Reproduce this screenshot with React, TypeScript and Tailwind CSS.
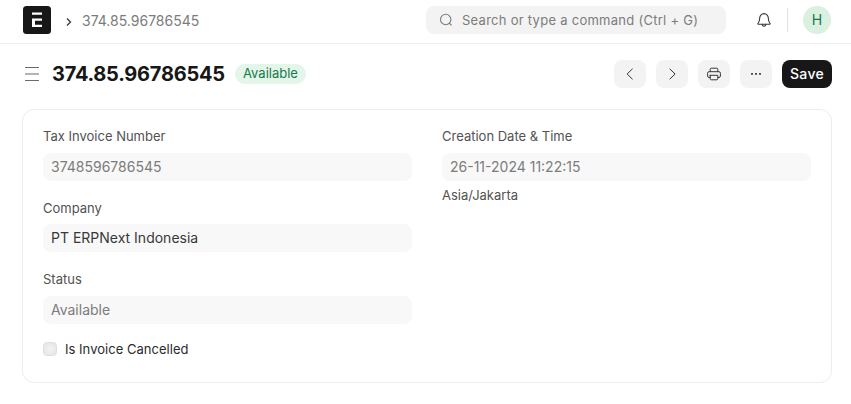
import type { ReactNode } from "react";

function Logo() {
  return (
    <svg width="28" height="28" viewBox="0 0 28 28" fill="none" className="shrink-0">
      <rect width="28" height="28" rx="3.5" fill="#171717" />
      <path d="M9 6.6h10v2.2H9zM9 12.4h10v2.4h-7V18.8h7V21H9z" fill="#fff" />
    </svg>
  );
}

function IconButton({ children, label }: { children: ReactNode; label: string }) {
  return (
    <button
      aria-label={label}
      className="flex h-7 w-8 items-center justify-center rounded-lg bg-[#f3f3f3] text-[#383838]"
    >
      <svg width="16" height="16" viewBox="0 0 16 16" fill="none" stroke="currentColor" strokeLinecap="round" strokeLinejoin="round">
        {children}
      </svg>
    </button>
  );
}

function Field({ label, value, link = false }: { label: string; value: string; link?: boolean }) {
  return (
    <div>
      <div className="h-[17px] text-[13px] leading-[17px] text-[#525252]">{label}</div>
      <div
        className={`flex h-7 items-center rounded-lg bg-[#f8f8f8] px-2 text-sm ${
          link ? "mt-[7px] text-[#383838]" : "mt-2 text-[#7c7c7c]"
        }`}
      >
        {value}
      </div>
    </div>
  );
}

export default function App() {
  return (
    <div className="h-[404px] w-[851px] overflow-hidden bg-white font-['Inter',sans-serif] text-[#171717]">
      <header className="flex h-11 items-start border-b border-[#ededed] pt-1.5 pr-5 pl-[23px]">
        <Logo />
        <svg width="8" height="10" viewBox="0 0 8 10" fill="none" stroke="#383838" strokeWidth="1.3" className="mt-[11px] ml-3.5">
          <path d="M2 1.5 5.5 5 2 8.5" />
        </svg>
        <span className="ml-[9px] text-sm leading-[29px] text-[#7c7c7c]">374.85.96786545</span>
        <div className="ml-auto flex h-7 w-[300px] items-center rounded-lg bg-[#f3f3f3] pl-3">
          <svg width="16" height="16" viewBox="0 0 16 16" fill="none" stroke="#7c7c7c" strokeWidth="1.1" strokeLinecap="round">
            <circle cx="7.7" cy="7.5" r="5.2" />
            <path d="m11.5 11.3 1.7 1.7" />
          </svg>
          <span className="ml-2 pt-px text-[13px] tracking-[0.27px] whitespace-nowrap text-[#7c7c7c]">
            Search or type a command (Ctrl + G)
          </span>
        </div>
        <svg width="16" height="16" viewBox="0 0 16 16" fill="none" stroke="#383838" strokeWidth="1.1" strokeLinecap="round" strokeLinejoin="round" className="mt-1.5 ml-[30px]">
          <path d="M8 1.8c-2.6 0-4.3 1.9-4.3 4.3 0 3.3-.8 4.3-1.7 5.2-.2.4 0 .9.5.9h11c.5 0 .7-.5.5-.9-.9-.9-1.7-1.9-1.7-5.2 0-2.4-1.7-4.3-4.3-4.3Z" />
          <path d="M6.2 12.4c.1 1.2.8 1.8 1.8 1.8s1.7-.6 1.8-1.8M8 1.2v.6" />
        </svg>
        <div className="mt-0.5 ml-[15px] h-6 w-px bg-[#e2e2e2]" />
        <div className="ml-[15px] flex size-7 items-center justify-center rounded-full bg-[#daf0e1] text-sm text-[#16794c]">
          H
        </div>
      </header>

      <div className="flex h-[60px] items-center pr-[19px] pl-6">
        <svg width="16" height="16" viewBox="0 0 16 16" stroke="#6a6a6a" strokeWidth="1.2">
          <path d="M1 1.5h14M1 8h14M1 14.5h14" />
        </svg>
        <h1 className="ml-3 w-[173px] text-xl leading-7 font-bold tracking-[-0.25px] whitespace-nowrap">374.85.96786545</h1>
        <span className="ml-2.5 flex h-5 w-[71px] items-center justify-center rounded-full bg-[#e4f5e9] text-[13px] text-[#16794c]">
          Available
        </span>
        <div className="ml-auto flex gap-2.5">
          <IconButton label="Previous">
            <path d="M10.3 3 5.1 8l5.2 5" />
          </IconButton>
          <IconButton label="Next">
            <path d="m5.9 3 5.2 5-5.2 5" />
          </IconButton>
          <IconButton label="Print">
            <path d="M4.2 5.7V3.2c0-.6.4-1 1-1h5.6c.6 0 1 .4 1 1v2.5M4.2 11.5H3.1a1.5 1.5 0 0 1-1.5-1.5V7.2a1.5 1.5 0 0 1 1.5-1.5h9.8a1.5 1.5 0 0 1 1.5 1.5V10a1.5 1.5 0 0 1-1.5 1.5h-1.1M4.2 9.3h7.6v3.5c0 .6-.4 1-1 1H5.2c-.6 0-1-.4-1-1V9.3Z" />
          </IconButton>
          <IconButton label="More">
            <path d="M3.1 7h1.8v1.8H3.1zM7.1 7h1.8v1.8H7.1zM11.1 7h1.8v1.8h-1.8z" fill="currentColor" stroke="none" />
          </IconButton>
          <button className="h-7 w-[50px] rounded-lg bg-[#171717] text-sm font-medium tracking-[0.28px] text-white">Save</button>
        </div>
      </div>

      <main className="mt-[5px] ml-[22px] flex h-[274px] w-[810px] gap-[30px] rounded-xl border border-[#ededed] px-5 pt-[18px]">
        <section className="flex w-[369px] flex-col gap-[19px]">
          <Field label="Tax Invoice Number" value="3748596786545" />
          <Field label="Company" value="PT ERPNext Indonesia" link />
          <Field label="Status" value="Available" />
          <label className="-mt-px flex h-4 items-start gap-2 text-[13px] leading-[14px] tracking-[0.03px] text-[#2b2b2b]">
            <span className="size-3.5 rounded border border-[#dfdfdf] bg-radial from-[#f2f2f2] to-[#e5e5e5]" />
            Is Invoice Cancelled
          </label>
        </section>
        <section className="w-[369px]">
          <Field label="Creation Date & Time" value="26-11-2024 11:22:15" />
          <p className="mt-1.5 text-[13px] leading-[17px] text-[#525252]">Asia/Jakarta</p>
        </section>
      </main>
    </div>
  );
}
